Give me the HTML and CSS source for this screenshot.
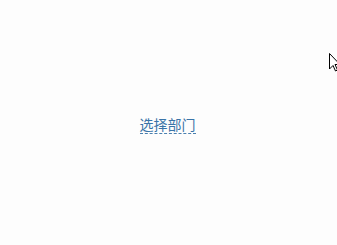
FILE: index.html
```html
<!DOCTYPE html>
<html lang="zh">
<head>
<meta charset="utf-8">
<link rel="stylesheet" href="styles.css">
</head>
<body>
<div class="stage">
  <a class="picker">选择部门</a>
</div>
<svg class="cursor" width="12" height="19" viewBox="0 0 12 19">
  <path d="M0.5 0.5 L0.5 16 L4 12.5 L6.5 18 L8.5 17 L6 11.5 L11 11.5 Z" fill="#fff" stroke="#000" stroke-width="1"/>
</svg>
</body>
</html>
```
FILE: styles.css
```css
html, body {
  margin: 0;
  padding: 0;
  background: #fdfdfd;
}
.stage {
  width: 337px;
  height: 245px;
  display: flex;
  align-items: center;
  justify-content: center;
  padding-top: 4px;
  box-sizing: border-box;
}
.picker {
  font-family: "Noto Sans CJK SC", sans-serif;
  font-size: 14px;
  line-height: 17px;
  color: #3a74a8;
  border-bottom: 1px dashed #4a7fae;
  padding-bottom: 0;
  margin-left: -2px;
}
.cursor {
  position: absolute;
  left: 329px;
  top: 53px;
}
```
